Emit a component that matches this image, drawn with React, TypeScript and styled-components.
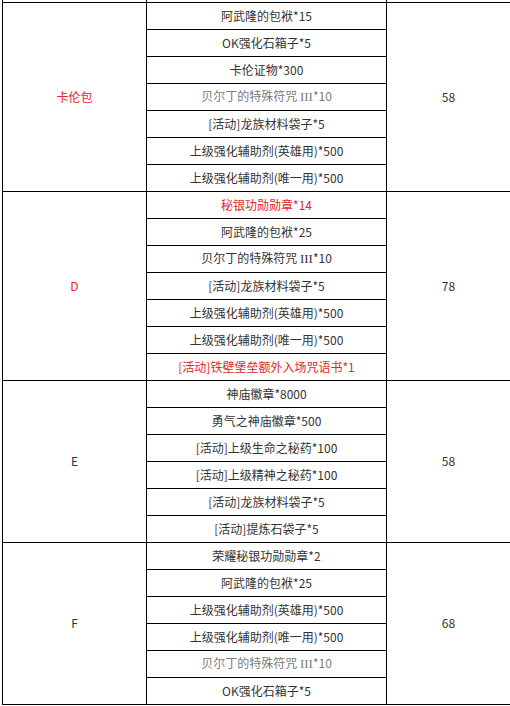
import * as React from "react"
import styled, { createGlobalStyle } from "styled-components"

type Tone = "normal" | "muted" | "red"

interface Item {
	text: React.ReactNode
	tone?: Tone
}

interface Group {
	name: string
	nameTone?: Tone
	price: string
	items: Item[]
}

const Rune = () => (
	<>
		贝尔丁的特殊符咒 <Roman>III</Roman>*10
	</>
)

const groups: Group[] = [
	{
		name: "卡伦包",
		nameTone: "red",
		price: "58",
		items: [
			{ text: "阿武隆的包袱*15" },
			{ text: "OK强化石箱子*5" },
			{ text: "卡伦证物*300" },
			{ text: <Rune />, tone: "muted" },
			{ text: "[活动]龙族材料袋子*5" },
			{ text: "上级强化辅助剂(英雄用)*500" },
			{ text: "上级强化辅助剂(唯一用)*500" },
		],
	},
	{
		name: "D",
		nameTone: "red",
		price: "78",
		items: [
			{ text: "秘银功勋勋章*14", tone: "red" },
			{ text: "阿武隆的包袱*25" },
			{ text: <Rune /> },
			{ text: "[活动]龙族材料袋子*5" },
			{ text: "上级强化辅助剂(英雄用)*500" },
			{ text: "上级强化辅助剂(唯一用)*500" },
			{ text: "[活动]铁壁堡垒额外入场咒语书*1", tone: "red" },
		],
	},
	{
		name: "E",
		price: "58",
		items: [
			{ text: "神庙徽章*8000" },
			{ text: "勇气之神庙徽章*500" },
			{ text: "[活动]上级生命之秘药*100" },
			{ text: "[活动]上级精神之秘药*100" },
			{ text: "[活动]龙族材料袋子*5" },
			{ text: "[活动]提炼石袋子*5" },
		],
	},
	{
		name: "F",
		price: "68",
		items: [
			{ text: "荣耀秘银功勋勋章*2" },
			{ text: "阿武隆的包袱*25" },
			{ text: "上级强化辅助剂(英雄用)*500" },
			{ text: "上级强化辅助剂(唯一用)*500" },
			{ text: <Rune />, tone: "muted" },
			{ text: "OK强化石箱子*5" },
		],
	},
]

export default function App() {
	return (
		<>
			<GlobalStyle />
			<Page>
				<Table>
					<colgroup>
						<col style={{ width: 144 }} />
						<col style={{ width: 240 }} />
						<col style={{ width: 124 }} />
					</colgroup>
					<tbody>
						<CutRow>
							<CutCell />
							<CutCell />
							<CutCell />
						</CutRow>
						{groups.map((group) =>
							group.items.map((item, i) => (
								<Row key={`${group.name}-${i}`}>
									{i === 0 && (
										<Cell rowSpan={group.items.length} $tone={group.nameTone}>
											{group.name}
										</Cell>
									)}
									<Cell $tone={item.tone}>{item.text}</Cell>
									{i === 0 && <Cell rowSpan={group.items.length}>{group.price}</Cell>}
								</Row>
							))
						)}
					</tbody>
				</Table>
			</Page>
		</>
	)
}

const toneColor: Record<Tone, string> = {
	normal: "#333333",
	muted: "#7a7a7a",
	red: "#e3262a",
}

const GlobalStyle = createGlobalStyle`
	html, body {
		margin: 0;
		padding: 0;
		background: #ffffff;
	}
	body {
		font-family: "Noto Sans CJK SC", "Noto Sans", sans-serif;
		font-size: 12px;
	}
`

const Page = styled.div`
	padding-left: 2px;
`

const Table = styled.table`
	border-collapse: collapse;
	table-layout: fixed;
	width: 508px;
`

const CutRow = styled.tr`
	height: 2px;
`

const CutCell = styled.td`
	padding: 0;
	border-left: 1px solid #000;
	border-right: 1px solid #000;
	border-bottom: 1px solid #000;
`

const Row = styled.tr`
	height: 27px;
`

const Cell = styled.td<{ $tone?: Tone }>`
	padding: 0;
	border: 1px solid #000;
	text-align: center;
	vertical-align: middle;
	line-height: 14px;
	color: ${({ $tone }) => toneColor[$tone ?? "normal"]};
	white-space: nowrap;
`

const Roman = styled.span`
	font-family: "Liberation Serif", serif;
	font-size: 13px;
`
